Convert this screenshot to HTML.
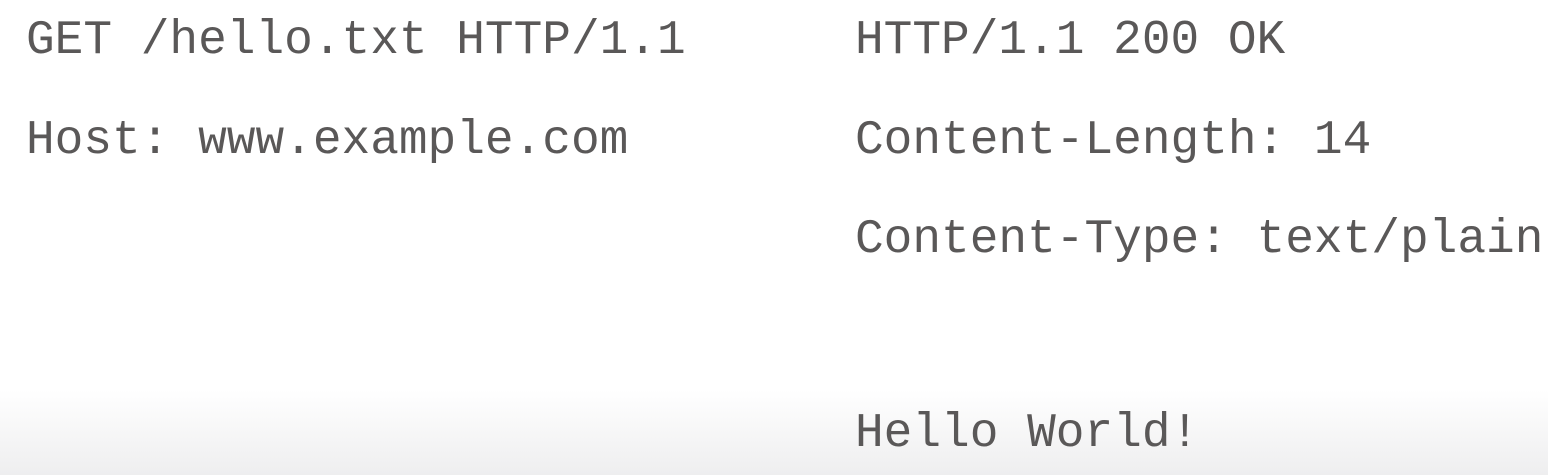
<!DOCTYPE html>
<html><head><style>
html,body{margin:0;padding:0}
body{width:1548px;height:475px;position:relative;overflow:hidden;background:linear-gradient(to bottom,#fff 0px,#fff 390px,#eeeeef 475px);}
div{position:absolute;font-family:"Liberation Mono",monospace;font-size:47.8px;line-height:48px;color:#5a5858;white-space:pre}
</style></head><body>
<div style="left:26px;top:17px">GET /hello.txt HTTP/1.1</div>
<div style="left:26px;top:117px">Host: www.example.com</div>
<div style="left:855px;top:17px">HTTP/1.1 200 OK</div>
<div style="left:855px;top:117px">Content-Length: 14</div>
<div style="left:855px;top:216px">Content-Type: text/plain</div>
<div style="left:855px;top:410px">Hello World!</div>
</body></html>
